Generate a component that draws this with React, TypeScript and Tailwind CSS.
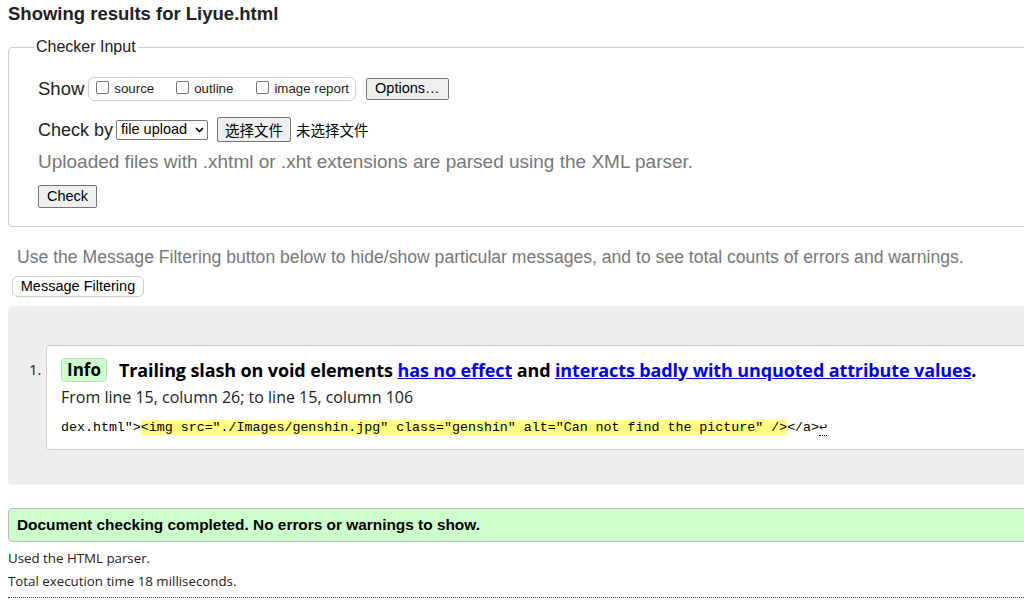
import React from "react";

const sans = { fontFamily: '"Liberation Sans", Arial, "Noto Sans CJK SC", sans-serif' };
const open = { fontFamily: '"Open Sans", "Liberation Sans", sans-serif' };

export default function App() {
  return (
    <div className="w-[1024px] h-[605px] overflow-hidden bg-white text-[#222]" style={sans}>
      <div className="w-[1400px] pl-[8px]">
        <h2 className="text-[18.5px] font-bold leading-[22px] pt-[3px] text-[#222]">Showing results for Liyue.html</h2>

        <fieldset className="mt-[13px] border border-[#ccc] rounded-[4px] pl-[29px] pb-[18px] w-[1300px]">
          <legend className="-ml-[4px] px-[2px] text-[16px] leading-[18px] text-[#222]">Checker Input</legend>
          <div className="flex items-center mt-[21px] h-[24px]">
            <span className="text-[18.5px] leading-[22px]">Show</span>
            <div className="ml-[4px] flex items-center h-[24px] border border-[#ccc] rounded-[6px] pl-[7px] pr-[6px] text-[13.3px]">
              <label className="flex items-center"><span className="w-[13px] h-[13px] border border-[#767676] rounded-[2px] mr-[5px] -mt-[3px]"></span>source</label>
              <label className="flex items-center ml-[22px]"><span className="w-[13px] h-[13px] border border-[#767676] rounded-[2px] mr-[5px] -mt-[3px]"></span>outline</label>
              <label className="flex items-center ml-[23px]"><span className="w-[13px] h-[13px] border border-[#767676] rounded-[2px] mr-[5px] -mt-[3px]"></span>image report</label>
            </div>
            <div className="ml-[10px] h-[22px] px-[8px] flex items-center border border-[#767676] rounded-[2px] bg-[#efefef] text-[14.5px] text-black">Options…</div>
          </div>
          <div className="flex items-center mt-[16px] h-[25px]">
            <span className="text-[18px] leading-[22px]">Check by</span>
            <div className="ml-[3px] h-[20px] w-[92px] flex items-center justify-between border border-[#767676] rounded-[2px] pl-[4px] pr-[3px] text-[14.5px] text-black">
              <span>file upload</span>
              <svg width="9" height="6" viewBox="0 0 9 6"><path d="M1 1l3.5 3.5L8 1" fill="none" stroke="#000" strokeWidth="1.6" /></svg>
            </div>
            <div className="ml-[9px] h-[25px] px-[7px] flex items-center border border-[#767676] rounded-[2px] bg-[#efefef] text-[14.5px] text-black" style={{ fontFamily: '"Noto Sans CJK SC", sans-serif' }}>选择文件</div>
            <span className="ml-[5px] text-[14.5px] text-black" style={{ fontFamily: '"Noto Sans CJK SC", sans-serif' }}>未选择文件</span>
          </div>
          <p className="mt-[9px] text-[19px] leading-[22px] text-[#777]">Uploaded files with .xhtml or .xht extensions are parsed using the XML parser.</p>
          <div className="mt-[12px] w-[59px] h-[23px] flex items-center justify-center border border-[#767676] rounded-[2px] bg-[#efefef] text-[14.5px] text-black">Check</div>
        </fieldset>

        <p className="mt-[19px] ml-[9px] text-[17.6px] leading-[22px] text-[#777]">Use the Message Filtering button below to hide/show particular messages, and to see total counts of errors and warnings.</p>
        <div className="mt-[8px] ml-[4px] w-[132px] h-[21px] flex items-center justify-center border border-[#ccc] rounded-[6px] bg-white text-[14.5px] text-black">Message Filtering</div>

        <div className="mt-[9px] bg-[#eee] rounded-[5px] h-[179px] pt-[39px] pl-[21px] flex">
          <span className="mt-[13px] text-[15px] text-[#222] w-[17px]" style={open}>1.</span>
          <div className="bg-white border border-[#ccc] rounded-[4px] w-[1300px] h-[105px] pl-[14px] pt-[11px]" style={open}>
            <div className="flex items-center h-[26px]">
              <span className="h-[24px] px-[5px] flex items-center bg-[#ccffcc] border border-[#b8e0b8] rounded-[4px] text-[17px] font-bold text-black">Info</span>
              <span className="ml-[12px] text-[18px] tracking-[-0.12px] font-bold text-black whitespace-nowrap">
                Trailing slash on void elements{" "}
                <a className="text-[#0000ee] underline">has no effect</a> and{" "}
                <a className="text-[#0000ee] underline">interacts badly with unquoted attribute values</a>.
              </span>
            </div>
            <p className="mt-[4px] text-[16px] leading-[21px] text-[#222]">From line 15, column 26; to line 15, column 106</p>
            <p className="mt-[11px] text-[13.3px] leading-[18px] text-black whitespace-pre" style={{ fontFamily: '"Liberation Mono", monospace' }}>
              {'dex.html">'}
              <span className="bg-[#ffff80]">{'<img src="./Images/genshin.jpg" class="genshin" alt="Can not find the picture" />'}</span>
              {'</a>'}
              <span className="border-b border-dotted border-black">↩</span>
            </p>
          </div>
        </div>

        <div className="mt-[23px] h-[34px] w-[1300px] bg-[#ccffcc] border border-[#bbb] rounded-[4px] pl-[8px] flex items-center text-[15.4px] font-bold text-black">
          Document checking completed. No errors or warnings to show.
        </div>
        <p className="mt-[6px] text-[13.3px] leading-[20px] text-[#222]" style={open}>Used the HTML parser.</p>
        <p className="mt-[3px] text-[13.3px] leading-[20px] text-[#222]" style={open}>Total execution time 18 milliseconds.</p>
        <div className="mt-[6px] border-t border-dotted border-[#444] w-[1300px]"></div>
      </div>
    </div>
  );
}
